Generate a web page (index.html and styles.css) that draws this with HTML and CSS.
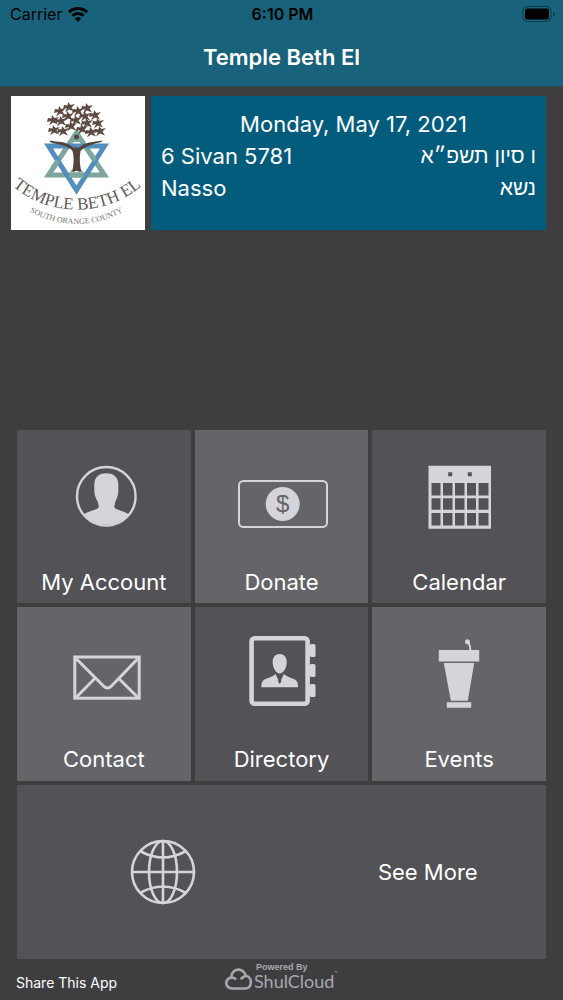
FILE: index.html
```
<!DOCTYPE html>
<html lang="en">

<head>
    <meta charset="utf-8">
    <meta name="viewport" content="width=device-width">
    <title>Temple Beth El</title>
    <link rel="stylesheet" href="styles.css">
</head>

<body>
    <header class="top">
        <div class="status">
            <div class="carrier">
                <span>Carrier</span>
                <svg width="20" height="16" viewBox="0 0 20 16" fill="none" stroke="#000" stroke-width="3">
                    <path d="M1 6.2a12.8 12.8 0 0 1 18 0" />
                    <path d="M4.4 9.8a8 8 0 0 1 11.2 0" />
                    <path d="M10 15.8l-3.2-3.2a4.5 4.5 0 0 1 6.4 0z" fill="#000" stroke="none" />
                </svg>
            </div>
            <span class="time">6:10 PM</span>
            <svg class="battery" width="33" height="16" viewBox="0 0 33 16">
                <rect x="1" y="0.5" width="28" height="15" rx="4" fill="none" stroke="#0b3a4c" />
                <rect x="3" y="2.5" width="24" height="11" rx="2" />
                <path d="M31 5.5v5q1.500-1 1.500-2.500t-1.500-2.500z" fill="#0b3a4c" />
            </svg>
        </div>
        <h1>Temple Beth El</h1>
    </header>

    <main>
        <section class="info">
            <svg class="logo" viewBox="0 0 134 134" role="img" aria-label="Temple Beth El, South Orange County">
                <path d="M65.500 37L37.500 79H93.500z" fill="none" stroke="#7da69c" stroke-width="5" />
                <path d="M37.500 50H93.500L65.500 94z" fill="none" stroke="#538fbe" stroke-width="5" />
                <path d="M47 64.700L42 72M58 79H73M84 64.700L79 57" fill="none" stroke="#7da69c" stroke-width="5" />
                <path d="M65.500 33l8 13h-16z" fill="#7da69c" />
                <g fill="#54443e">
                    <path d="M61.500 74c1.500-7 1.500-14 0-19-3-4-10-6-20-8l-3-1.500 1-1 5 1c9 0 14 3 18 6h6c4-4 9-5 16-6l7-1-1 1.500c-9 2-16 4-21 9-1 6-1 12 .5 19l2 1.500-4 .2-2.500-1-2.500 1-4-.2z" />
                    <circle cx="65.500" cy="41" r="2.500" />
                </g>
                <defs>
                    <path id="leaf" d="M-5-2L-1.500-1.500-1-5 1.500-2 6-3 2.500.5 5 4.500 0 2.500-4 5.500-2 1-6 2z" />
                </defs>
                <g fill="#5c4a43">
                    <use href="#leaf" x="43" y="34" /><use href="#leaf" x="42" y="24" />
                    <use href="#leaf" x="49" y="15" /><use href="#leaf" x="58" y="11" />
                    <use href="#leaf" x="67" y="15" /><use href="#leaf" x="76" y="12" />
                    <use href="#leaf" x="84" y="19" /><use href="#leaf" x="87" y="27" />
                    <use href="#leaf" x="89" y="35" /><use href="#leaf" x="80" y="36" />
                    <use href="#leaf" x="76" y="27" /><use href="#leaf" x="74" y="20" />
                    <use href="#leaf" x="65" y="24" /><use href="#leaf" x="57" y="20" />
                    <use href="#leaf" x="50" y="25" /><use href="#leaf" x="52" y="35" />
                    <use href="#leaf" x="60" y="30" /><use href="#leaf" x="71" y="33" />
                </g>
                <path id="arc-name" d="M-6 83A100 100 0 0 0 138 83" fill="none" />
                <path id="arc-place" d="M10 110A95 95 0 0 0 121 110" fill="none" />
                <text class="logo-name" text-anchor="middle"><textPath href="#arc-name" startOffset="50%">TEMPLE BETH EL</textPath></text>
                <text class="logo-place" text-anchor="middle"><textPath href="#arc-place" startOffset="50%">SOUTH ORANGE COUNTY</textPath></text>
            </svg>
            <div class="dates">
                <p class="today">Monday, May 17, 2021</p>
                <p class="pair"><span>6 Sivan 5781</span><span class="hebrew" lang="he" dir="rtl">ו סיון תשפ״א</span></p>
                <p class="pair"><span>Nasso</span><span class="hebrew" lang="he" dir="rtl">נשא</span></p>
            </div>
        </section>

        <nav class="tiles">
            <a class="tile" href="#account">
                <svg class="icon" viewBox="0 0 120 120">
                    <circle cx="62.300" cy="56.300" r="29.300" fill="none" stroke="#d5d4da" stroke-width="2.400" />
                    <path d="M62.300 33.200c8 0 12 4.500 12 11.500v6c0 4-1.300 8-3 11l-1 5c0 3 9 4 14.500 7.500a29.300 29.300 0 0 1-45 0c5.500-3.500 15-4.500 15-7.500l-1-5c-2-3-3.500-7-3.500-11v-6c0-7 4-11.500 12-11.500z" />
                </svg>
                <span>My Account</span>
            </a>
            <a class="tile light" href="#donate">
                <svg class="icon" viewBox="0 0 120 120">
                    <rect x="17" y="41" width="88" height="46" rx="4.500" fill="none" stroke="#d5d4da" stroke-width="2" />
                    <circle cx="60.700" cy="64" r="17" />
                    <text class="dollar" x="60.700" y="72" text-anchor="middle">$</text>
                </svg>
                <span>Donate</span>
            </a>
            <a class="tile" href="#calendar">
                <svg class="icon" viewBox="0 0 120 120">
                    <path fill-rule="evenodd" d="M29.500 25.700H92v63H29.500zM49.200 32.300v4h4v-4zM68.800 32.300v4h4v-4z
                        M32.500 43v12.500h9V43zM44 43v12.500h9.500V43zM56 43v12.500h9.500V43zM68 43v12.500h9V43zM79.500 43v12.500h10V43z
                        M32.500 58.300v11.500h9V58.300zM44 58.300v11.500h9.500V58.300zM56 58.300v11.500h9.500V58.300zM68 58.300v11.500h9V58.300zM79.500 58.300v11.500h10V58.300z
                        M32.500 73v12.500h9V73zM44 73v12.500h9.500V73zM56 73v12.500h9.500V73zM68 73v12.500h9V73zM79.500 73v12.500h10V73z" />
                </svg>
                <span>Calendar</span>
            </a>
            <a class="tile light" href="#contact">
                <svg class="icon" viewBox="0 0 120 120">
                    <g fill="none" stroke="#d5d4da" stroke-width="3">
                        <rect x="30.800" y="40" width="64.400" height="41.200" />
                        <path d="M31 40.500L59.500 69q4 4 8 0L95 40.500M51 61.300L31.500 81M74.500 61.300L94.500 81" />
                    </g>
                </svg>
                <span>Contact</span>
            </a>
            <a class="tile" href="#directory">
                <svg class="icon" viewBox="0 0 120 120">
                    <rect x="29.600" y="21.300" width="56" height="65.500" rx="3" fill="none" stroke="#d5d4da" stroke-width="4.600" />
                    <path d="M87 28.500l2-1.500h3q1.500 0 1.500 1.500v10q0 1.500-1.500 1.500h-3l-2-1.500zM87 48.500l2-1.500h3q1.500 0 1.500 1.500v10q0 1.500-1.500 1.500h-3l-2-1.500zM87 68.500l2-1.500h3q1.500 0 1.500 1.500v10q0 1.500-1.500 1.500h-3l-2-1.500z" />
                    <path d="M57.700 37c5 0 7.300 3.500 7 9-.2 5-3.500 10.500-7 10.500s-6.800-5.500-7-10.500c-.3-5.500 2-9 7-9z" />
                    <path d="M53.500 57l4.200 9 4.200-9c3 3 8 4 11 5.500 2.500 1.500 3.200 4 3.200 7.800H39.300c0-3.800.7-6.300 3.200-7.800 3-1.500 8-2.500 11-5.500z" />
                    <path d="M56.500 57.500h2.400l-.4 2 .8 5-1.600 2.500-1.600-2.500.8-5z" fill="#535257" />
                </svg>
                <span>Directory</span>
            </a>
            <a class="tile light" href="#events">
                <svg class="icon" viewBox="0 0 120 120">
                    <path d="M39.800 33h40.400v11.600H39.800zM44.800 46h30.400l-6.400 37.700h-17zM47.800 85.300h24.400v5.400H47.800z" />
                    <circle cx="68.500" cy="24.800" r="2.500" />
                    <path d="M69.500 26q2 3 1.800 7.500" fill="none" stroke="#d5d4da" stroke-width="2" />
                </svg>
                <span>Events</span>
            </a>
            <a class="tile more" href="#more">
                <svg class="icon" viewBox="0 0 120 120">
                    <g fill="none" stroke="#d5d4da" stroke-width="2.600">
                        <circle cx="60" cy="60" r="31" />
                        <ellipse cx="60" cy="60" rx="14" ry="31" />
                        <path d="M60 29v62M29 60h62M37 39q23 13 46 0M37 81q23-13 46 0" />
                    </g>
                </svg>
                <span>See More</span>
            </a>
        </nav>
    </main>

    <footer class="bottom">
        <a href="#share">Share This App</a>
        <svg class="powered" width="118" height="32" viewBox="0 0 118 32" role="img" aria-label="Powered By ShulCloud">
            <path d="M9 26.500a5.500 5.500 0 0 1-.5-11C8 5 22 5.500 22.500 14c7 0 7.500 12.500-.5 12.500zM8 16q3-1 5 1.500M22 14.500q-3 .5-4 3" fill="none" stroke="#a9a8ae" stroke-width="2.600" stroke-linejoin="round" />
            <text class="powered-by" x="33" y="8">Powered By</text>
            <text class="brand" x="31" y="26">ShulCloud</text>
            <text class="tm" x="111" y="14">™</text>
        </svg>
    </footer>
</body>

</html>
```
FILE: styles.css
```
* {
    box-sizing: border-box;
}

body {
    display: flex;
    flex-direction: column;
    min-height: 100vh;
    margin: 0;
    background-color: #3e3e41;
    color: #fff;
    font-family: Inter, "Liberation Sans", sans-serif;
    font-size: 22px;
    line-height: 32px;
}

a {
    color: #fff;
    text-decoration: none;
}

/* header */
.top {
    height: 87px;
    background-color: #18627c;
    border-bottom: 1px solid #2b4a57;
}

.status {
    display: grid;
    grid-template-columns: 1fr auto 1fr;
    align-items: center;
    padding: 0 8px 0 10px;
    height: 28px;
    color: #000;
    font-size: 16px;
    line-height: 28px;
}

.carrier {
    display: flex;
    align-items: center;
    gap: 6px;
}

.time {
    font-weight: 600;
}

.battery {
    justify-self: end;
}

h1 {
    margin: 13px 0 0;
    text-align: center;
    font-size: 22px;
    font-weight: 600;
}

/* logo and dates */
main {
    display: flex;
    flex-direction: column;
    flex: 1;
}

.info {
    display: flex;
    gap: 6px;
    padding: 9px 17px 0 11px;
}

.logo {
    flex: none;
    width: 134px;
    height: 134px;
    background-color: #fff;
}

.logo-name {
    font-family: "Liberation Serif", serif;
    font-size: 17px;
    fill: #5f5a5a;
}

.logo-place {
    font-family: "Liberation Serif", serif;
    font-size: 8px;
    fill: #77716f;
}

.dates {
    flex: 1;
    padding: 12px 10px;
    background-color: #045c7d;
}

.dates p {
    margin: 0;
}

.dates .today {
    padding-left: 10px;
    text-align: center;
}

.pair {
    display: flex;
    justify-content: space-between;
}

.hebrew {
    font-size: 21px;
}

/* menu */
.tiles {
    display: grid;
    grid-template-columns: repeat(3, 1fr);
    gap: 4px;
    margin-top: auto;
    padding: 0 17px;
}

.tile {
    display: flex;
    flex-direction: column;
    align-items: center;
    aspect-ratio: 1;
    padding-top: 10px;
    background-color: #535257;
}

.tile.light {
    background-color: #656469;
}

.icon {
    width: 120px;
    height: 120px;
    margin-bottom: 6px;
    fill: #d5d4da;
}

.dollar {
    font-family: "Liberation Sans", sans-serif;
    font-size: 24px;
    fill: #656469;
}

.tile.more {
    display: grid;
    grid-column: 1 / -1;
    grid-template-columns: 1fr 1fr;
    justify-items: center;
    aspect-ratio: 529 / 174;
    padding: 0;
}

.more .icon,
.more span {
    margin: 0 0 0 28px;
}

/* footer */
.bottom {
    display: grid;
    grid-template-columns: 1fr auto 1fr;
    height: 41px;
    padding: 3px 16px 0;
    font-size: 14px;
}

.bottom a {
    padding-top: 5px;
}

.powered {
    fill: #a9a8ae;
}

.powered-by {
    font-family: "Liberation Sans", sans-serif;
    font-size: 9px;
    font-weight: bold;
}

.brand {
    font-family: Lato, sans-serif;
    font-size: 18px;
}

.tm {
    font-size: 6px;
}
```
